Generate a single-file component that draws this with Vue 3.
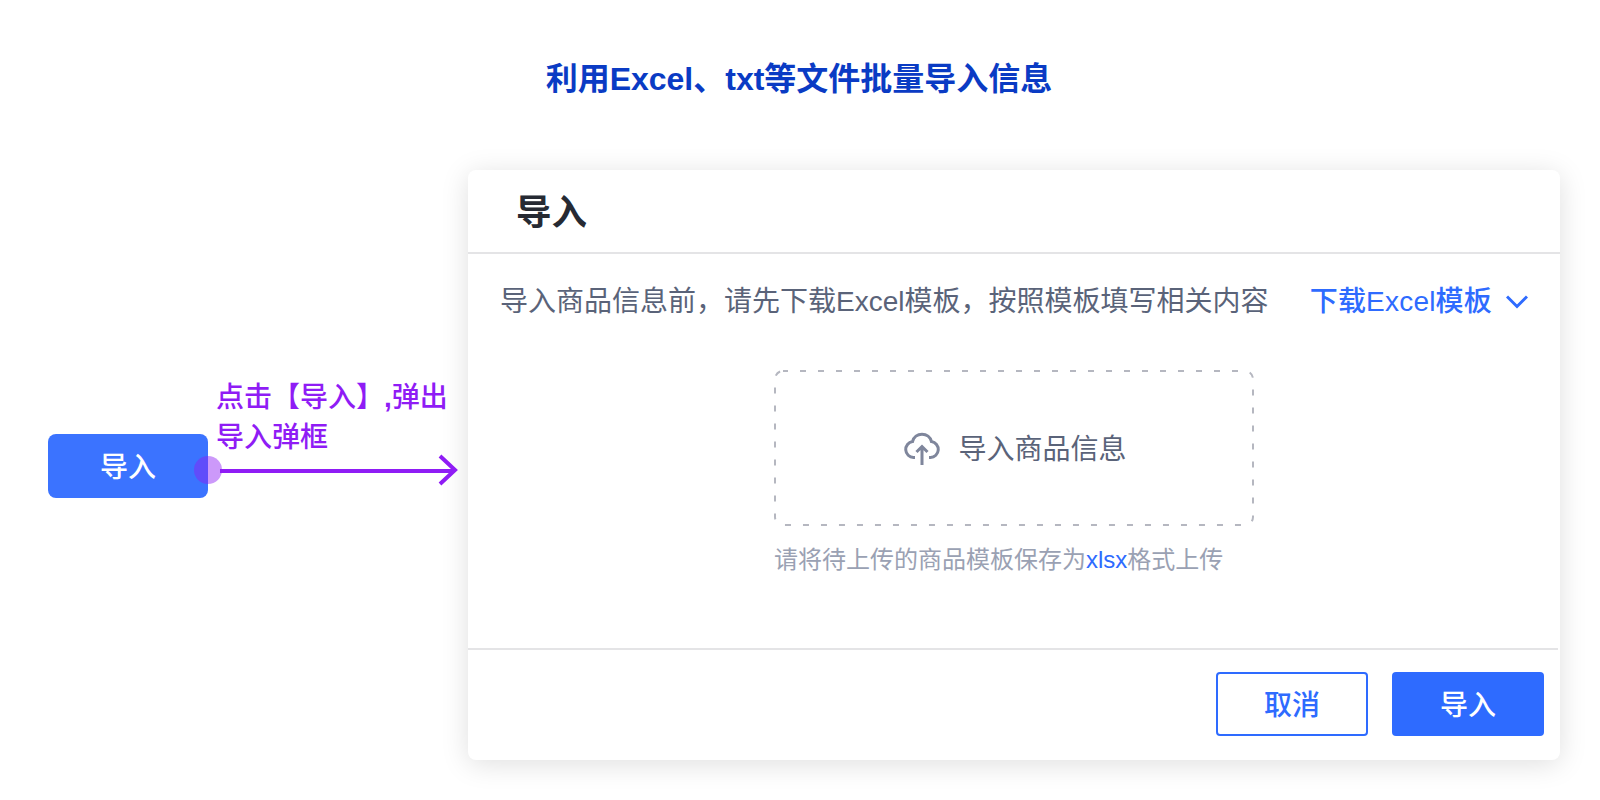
<script setup>
const prompt = '导入商品信息前，请先下载Excel模板，按照模板填写相关内容'
</script>

<template>
  <div class="page">
    <h1 class="headline">利用Excel、txt等文件批量导入信息</h1>
    <div class="stage">
      <div class="flow">
        <button class="trigger">
          导入
          <span class="callout">
            <span class="caption">点击【导入】<b class="comma">,</b>弹出<br />导入弹框</span>
            <span class="dot"></span>
            <svg class="arrow" width="242" height="32" viewBox="0 0 242 32" fill="none">
              <path d="M0 17H234" stroke="#8f1cf5" stroke-width="4" />
              <path d="M220 2L235 16L220 30" stroke="#8f1cf5" stroke-width="4" />
            </svg>
          </span>
        </button>
      </div>
      <section class="dialog">
        <header class="dialog-head">导入</header>
        <div class="dialog-body">
          <div class="intro">
            <span>{{ prompt }}</span>
            <span class="download">
              下载Excel模板
              <svg width="22" height="14" viewBox="0 0 22 14" fill="none">
                <path d="M1 1.5L11 11.5L21 1.5" stroke="#2e6bff" stroke-width="3" />
              </svg>
            </span>
          </div>
          <div class="drop">
            <svg class="dash" width="480" height="156" viewBox="0 0 480 156" fill="none">
              <rect x="1" y="1" width="478" height="154" rx="8" stroke="#b5b7c0" stroke-width="2" stroke-dasharray="6 12" stroke-dashoffset="1" />
            </svg>
            <svg width="36" height="33" viewBox="0 0 36 33" fill="none" stroke="#7f869c" stroke-width="3">
              <path d="M11 25.5H9.5A8 8 0 0 1 8.5 9.6A9.8 9.8 0 0 1 27.5 9.6A8 8 0 0 1 26.5 25.5H25" />
              <path d="M18 33V14.5M12.5 20L18 14.5L23.5 20" />
            </svg>
            <span class="drop-label">导入商品信息</span>
          </div>
          <p class="hint">请将待上传的商品模板保存为<span class="ext">xlsx</span>格式上传</p>
        </div>
        <footer class="dialog-foot">
          <button class="btn ghost">取消</button>
          <button class="btn solid">导入</button>
        </footer>
      </section>
    </div>
  </div>
</template>

<style>
html, body { margin: 0; background: #fff; }
</style>

<style scoped>
.page {
  width: 1600px;
  height: 800px;
  overflow: hidden;
  background: #fff;
  font-family: "Liberation Sans", "Noto Sans CJK SC", sans-serif;
}
.headline {
  margin: 0;
  padding: 57px 2px 0 0;
  font-size: 32px;
  line-height: 44px;
  font-weight: 700;
  color: #0a3bc4;
  text-align: center;
}
.stage {
  display: flex;
  margin-top: 69px;
}
.flow {
  width: 420px;
  padding: 264px 0 0 48px;
}
.trigger {
  position: relative;
  display: block;
  width: 160px;
  height: 64px;
  padding: 3px 0 0;
  border: 0;
  border-radius: 8px;
  background: #3b73ff;
  color: #fff;
  font: 500 28px/1 "Liberation Sans", "Noto Sans CJK SC", sans-serif;
}
.callout {
  position: absolute;
  left: 100%;
  top: 0;
}
.caption {
  position: absolute;
  left: 8px;
  top: -56px;
  width: 240px;
  color: #8f1cf5;
  font-size: 28px;
  line-height: 40px;
  font-weight: 500;
  text-align: left;
  white-space: nowrap;
}
.comma {
  font-weight: 700;
}
.dot {
  position: absolute;
  left: -14px;
  top: 22px;
  width: 28px;
  height: 28px;
  border-radius: 50%;
  background: rgba(143, 28, 245, 0.45);
}
.arrow {
  position: absolute;
  left: 12px;
  top: 20px;
  display: block;
}
.dialog {
  display: flex;
  flex-direction: column;
  width: 1092px;
  height: 590px;
  border-radius: 8px;
  background: #fff;
  box-shadow: 0 4px 28px rgba(0, 0, 0, 0.13);
}
.dialog-head {
  height: 82px;
  padding-left: 48px;
  border-bottom: 2px solid #e4e4e6;
  color: #262a33;
  font-size: 35.5px;
  line-height: 86px;
  font-weight: 700;
}
.dialog-body {
  flex: 1;
  padding: 28px 32px 0;
}
.intro {
  display: flex;
  justify-content: space-between;
  color: #5a6379;
  font-size: 28px;
  line-height: 40px;
}
.download {
  display: flex;
  align-items: center;
  gap: 14px;
  color: #2e6bff;
  font-weight: 500;
  letter-spacing: 0.2px;
}
.drop {
  position: relative;
  display: flex;
  align-items: center;
  justify-content: center;
  gap: 18px;
  box-sizing: border-box;
  width: 480px;
  height: 156px;
  margin: 48px auto 0;
  padding-left: 3px;
  color: #5a6379;
  font-size: 28px;
}
.dash {
  position: absolute;
  left: 0;
  top: 0;
}
.drop-label {
  padding-bottom: 2px;
}
.hint {
  width: 480px;
  margin: 16px auto 0;
  color: #9aa1b3;
  font-size: 24px;
  line-height: 36px;
}
.ext {
  color: #2e6bff;
}
.dialog-foot {
  display: flex;
  justify-content: flex-end;
  gap: 24px;
  height: 112px;
  box-sizing: border-box;
  margin-right: 2px;
  padding: 22px 14px 0 0;
  border-top: 2px solid #e4e4e6;
}
.btn {
  box-sizing: border-box;
  width: 152px;
  height: 64px;
  padding: 3px 0 0;
  border-radius: 4px;
  font: 500 28px/1 "Liberation Sans", "Noto Sans CJK SC", sans-serif;
}
.ghost {
  border: 2px solid #2e6bff;
  background: #fff;
  color: #2e6bff;
}
.solid {
  border: 0;
  background: #2e6bff;
  color: #fff;
}
</style>
